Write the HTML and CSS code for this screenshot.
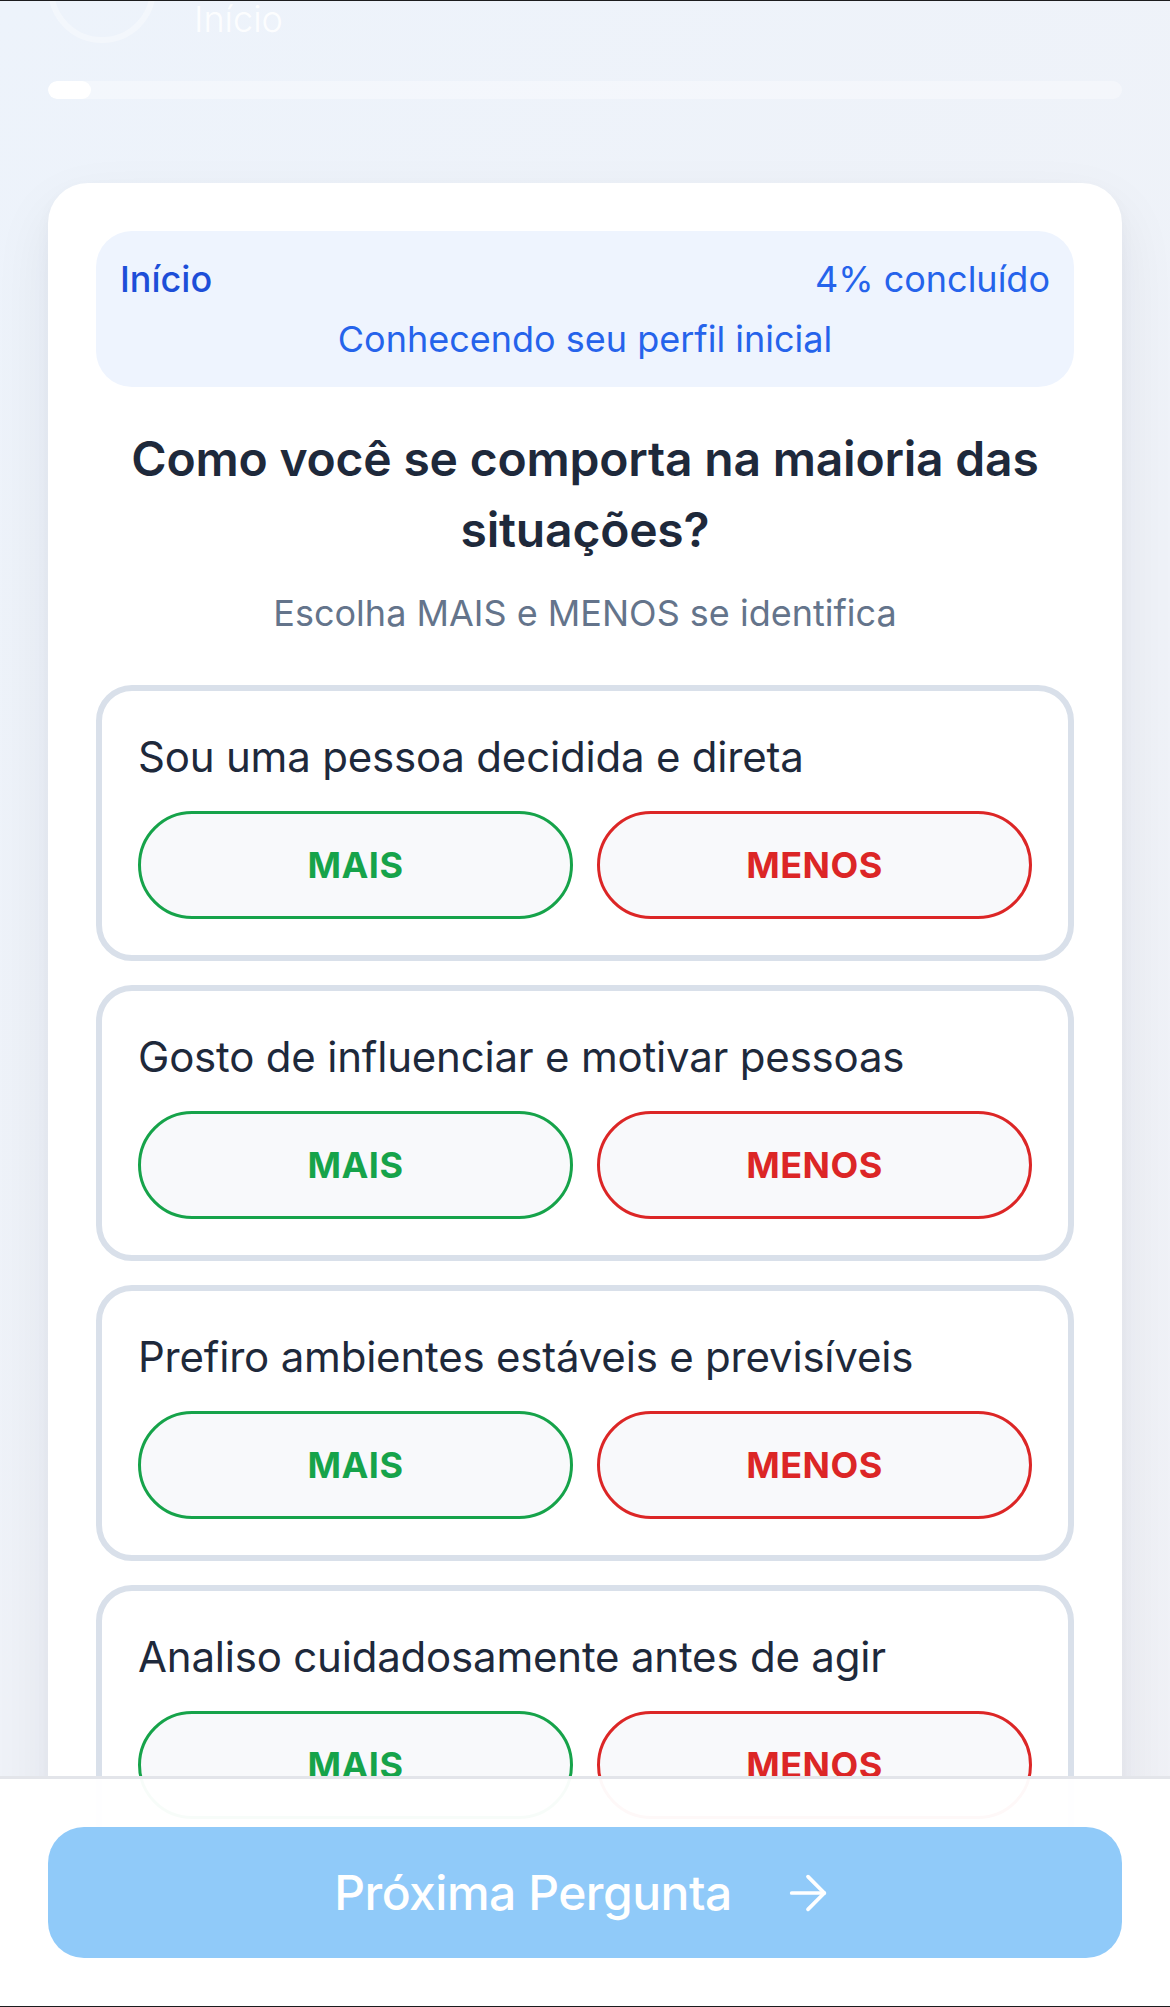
FILE: index.html
```html
<!DOCTYPE html>
<html lang="pt-BR">
<head>
<meta charset="utf-8">
<title>Teste de Perfil</title>
<link rel="stylesheet" href="styles.css">
</head>
<body>
<div class="frame-top"></div>
<main class="page">
  <header class="topbar">
    <div class="avatar"></div>
    <div class="topbar-text">
      <div class="topbar-sub">Início</div>
    </div>
  </header>

  <div class="progress"><div class="progress-fill" style="width:4%"></div></div>

  <section class="card">
    <div class="stage">
      <div class="stage-row">
        <span class="stage-name">Início</span>
        <span class="stage-pct">4% concluído</span>
      </div>
      <div class="stage-desc">Conhecendo seu perfil inicial</div>
    </div>

    <h1 class="question">Como você se comporta na maioria das situações?</h1>
    <p class="hint">Escolha MAIS e MENOS se identifica</p>

    <div class="options">
      <div class="option">
        <p class="option-text">Sou uma pessoa decidida e direta</p>
        <div class="choice-row">
          <button class="choice choice-more">MAIS</button>
          <button class="choice choice-less">MENOS</button>
        </div>
      </div>
      <div class="option">
        <p class="option-text">Gosto de influenciar e motivar pessoas</p>
        <div class="choice-row">
          <button class="choice choice-more">MAIS</button>
          <button class="choice choice-less">MENOS</button>
        </div>
      </div>
      <div class="option">
        <p class="option-text">Prefiro ambientes estáveis e previsíveis</p>
        <div class="choice-row">
          <button class="choice choice-more">MAIS</button>
          <button class="choice choice-less">MENOS</button>
        </div>
      </div>
      <div class="option">
        <p class="option-text">Analiso cuidadosamente antes de agir</p>
        <div class="choice-row">
          <button class="choice choice-more">MAIS</button>
          <button class="choice choice-less">MENOS</button>
        </div>
      </div>
    </div>
  </section>
</main>

<footer class="bottom-bar">
  <button class="next-btn">
    <span>Próxima Pergunta</span>
    <svg class="next-arrow" viewBox="0 0 24 24" fill="none" stroke="currentColor" stroke-width="1.6" stroke-linecap="round" stroke-linejoin="round"><path d="M5 12h14"/><path d="m12 5 7 7-7 7"/></svg>
  </button>
</footer>
</body>
</html>
```

FILE: styles.css
```css
* { box-sizing: border-box; }

html, body {
  margin: 0;
  padding: 0;
}

body {
  width: 1170px;
  height: 2007px;
  overflow: hidden;
  font-family: Inter, "Noto Sans", "Liberation Sans", sans-serif;
  background: linear-gradient(135deg, #edf3fb 0%, #eff2f8 55%, #f0f1f6 100%);
  color: #1e293b;
}

.frame-top {
  position: fixed;
  top: 0;
  left: 0;
  right: 0;
  height: 1px;
  background: #1c1c1e;
  z-index: 10;
}

.page {
  padding: 0 48px 300px;
}

.topbar {
  display: flex;
  align-items: flex-start;
  gap: 38px;
  margin-top: -65px;
}

.avatar {
  width: 108px;
  height: 108px;
  border-radius: 50%;
  border: 6px solid rgba(255, 255, 255, 0.35);
  flex: none;
}

.topbar-text {
  display: flex;
  flex-direction: column;
  padding-top: 60px;
  color: #ffffff;
}

.topbar-sub {
  font-size: 36px;
  line-height: 48px;
  font-weight: 300;
  color: rgba(255, 255, 255, 0.9);
}

.progress {
  margin-top: 38px;
  height: 18px;
  border-radius: 9px;
  background: rgba(255, 255, 255, 0.35);
  overflow: hidden;
}

.progress-fill {
  height: 100%;
  border-radius: 9px;
  background: #ffffff;
}

.card {
  margin-top: 84px;
  background: #ffffff;
  border-radius: 40px;
  padding: 48px;
  box-shadow: 0 24px 60px rgba(15, 23, 42, 0.07), 0 6px 16px rgba(15, 23, 42, 0.03);
}

.stage {
  background: #eef4fe;
  border-radius: 36px;
  padding: 24px;
  font-size: 36px;
  line-height: 48px;
  color: #2563eb;
}

.stage-row {
  display: flex;
  justify-content: space-between;
}

.stage-name {
  font-weight: 500;
  color: #1d4ed8;
}

.stage-desc {
  margin-top: 12px;
  text-align: center;
}

.question {
  margin: 36px 0 0;
  font-size: 48px;
  line-height: 71px;
  font-weight: 600;
  text-align: center;
  color: #1e293b;
  letter-spacing: -0.2px;
}

.hint {
  margin: 24px 0 0;
  font-size: 36px;
  line-height: 48px;
  text-align: center;
  color: #64748b;
}

.options {
  margin-top: 48px;
  display: flex;
  flex-direction: column;
  gap: 24px;
}

.option {
  border: 6px solid #d9e0ea;
  border-radius: 36px;
  padding: 36px;
}

.option-text {
  margin: 0;
  font-size: 42px;
  line-height: 60px;
  color: #1e293b;
  letter-spacing: -0.2px;
}

.choice-row {
  margin-top: 24px;
  display: grid;
  grid-template-columns: 1fr 1fr;
  gap: 24px;
}

.choice {
  height: 108px;
  border-radius: 999px;
  background: #f8f9fb;
  font-family: inherit;
  font-size: 36px;
  font-weight: 700;
  letter-spacing: 0.5px;
  padding: 0;
}

.choice-more {
  border: 3px solid #16a34a;
  color: #16a34a;
}

.choice-less {
  border: 3px solid #dc2626;
  color: #dc2626;
}

.bottom-bar {
  position: fixed;
  left: 0;
  right: 0;
  bottom: 0;
  height: 231px;
  padding: 48px 48px 47px;
  background: rgba(255, 255, 255, 0.97);
  border-top: 3px solid #e3e5ea;
  border-bottom: 1px solid #1c1c1e;
}

.next-btn {
  width: 100%;
  height: 131px;
  border: none;
  border-radius: 36px;
  background: #90caf9;
  color: #ffffff;
  font-family: inherit;
  font-size: 48px;
  font-weight: 500;
  letter-spacing: -0.5px;
  display: flex;
  align-items: center;
  justify-content: center;
  padding: 0;
}

.next-arrow {
  width: 56px;
  height: 56px;
  margin-left: 48px;
}
```
